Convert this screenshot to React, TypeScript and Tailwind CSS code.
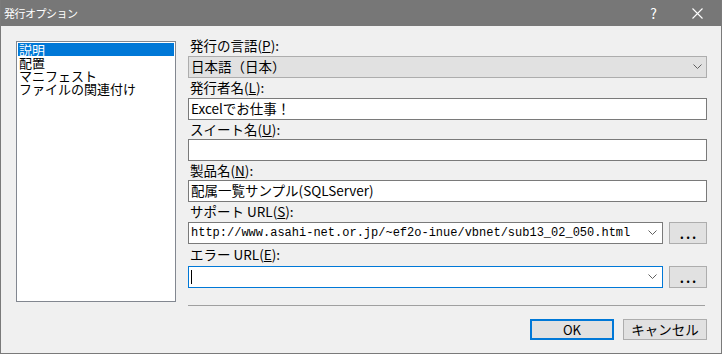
import { ReactNode } from "react";

const jp = { fontFamily: '"Noto Sans CJK JP", "Noto Sans", sans-serif' };
const mono = { fontFamily: '"Liberation Mono", "Noto Sans CJK JP", monospace' };

function Chevron() {
  return (
    <svg width="9" height="6" viewBox="0 0 9 6" className="shrink-0">
      <polyline points="0.5,0.5 4.5,4.5 8.5,0.5" fill="none" stroke="#606060" strokeWidth="1" />
    </svg>
  );
}

function Label({ children, h = "h-[20px]" }: { children: ReactNode; h?: string }) {
  return (
    <div className={`${h} flex items-center pl-[2px] text-[13.5px] leading-none text-black`}>{children}</div>
  );
}

function TextBox({ value }: { value?: string }) {
  return (
    <div className="h-[22px] w-[519px] border border-[#7a7a7a] bg-white flex items-center pl-[2px] text-[13.5px] leading-none">
      {value}
    </div>
  );
}

function BrowseButton() {
  return (
    <div className="h-[22px] w-[38px] border border-[#adadad] bg-[#e1e1e1] flex items-center justify-center pl-[2px] text-[13px] font-bold tracking-[2px] leading-none">
      ...
    </div>
  );
}

export default function App() {
  const pages = ["説明", "配置", "マニフェスト", "ファイルの関連付け"];

  return (
    <div className="w-[722px] h-[354px] bg-[#f0f0f0] border-x border-b border-[#7a7a7a] flex flex-col" style={jp}>
      {/* title bar */}
      <div className="h-[26px] bg-[#777777] flex items-center text-white shrink-0">
        <span className="pl-[3px] text-[11px] tracking-[-0.5px]">発行オプション</span>
        <span className="ml-auto text-[14px] leading-none mr-[35px]">?</span>
        <svg width="11" height="11" viewBox="0 0 11 11" className="mr-[18px]">
          <path d="M0.5 0.5 L10.5 10.5 M10.5 0.5 L0.5 10.5" stroke="white" strokeWidth="1.1" />
        </svg>
      </div>

      <div className="flex pl-[15px]">
        {/* page list */}
        <div className="mt-[15px] w-[160px] h-[261px] border border-[#828790] bg-white p-[1px] text-[13px] leading-[13px]">
          {pages.map((p, i) => (
            <div key={p} className={`h-[13px] pl-[1px] whitespace-nowrap ${i === 0 ? "bg-[#0078d7] text-white" : "text-black"}`}>
              {p}
            </div>
          ))}
        </div>

        {/* form */}
        <div className="ml-[12px] mt-[10px] flex flex-col w-[519px]">
          <Label>発行の言語(<u>P</u>):</Label>
          <div className="h-[22px] border border-[#adadad] bg-[#e1e1e1] flex items-center justify-between pl-[2px] pr-[4px] text-[13.5px] leading-none">
            <span>日本語（日本）</span>
            <Chevron />
          </div>

          <Label>発行者名(<u>L</u>):</Label>
          <TextBox value="Excelでお仕事！" />

          <Label h="h-[19px]">スイート名(<u>U</u>):</Label>
          <TextBox />

          <Label h="h-[19px]">製品名(<u>N</u>):</Label>
          <TextBox value="配属一覧サンプル(SQLServer)" />

          <Label>サポート URL(<u>S</u>):</Label>
          <div className="flex gap-[6px]">
            <div className="h-[22px] w-[475px] border border-[#7a7a7a] bg-white flex items-center justify-between pl-[2px] pr-[5px]">
              <span className="text-[12px] leading-none" style={mono}>
                http://www.asahi-net.or.jp/~ef2o-inue/vbnet/sub13_02_050.html
              </span>
              <Chevron />
            </div>
            <BrowseButton />
          </div>

          <Label h="h-[22px]">エラー URL(<u>E</u>):</Label>
          <div className="flex gap-[6px]">
            <div className="h-[22px] w-[475px] border border-[#0078d7] bg-white flex items-center justify-between pl-[2px] pr-[5px]">
              <span className="w-px h-[14px] bg-black" />
              <Chevron />
            </div>
            <BrowseButton />
          </div>

          <div className="mt-[17px] h-px w-[517px] bg-[#a0a0a0]" />

          <div className="mt-[13px] flex justify-end gap-[9px]">
            <div className="h-[21px] w-[84px] border-2 border-[#0078d7] bg-[#e1e1e1] flex items-center justify-center text-[13px] leading-none">
              OK
            </div>
            <div className="h-[21px] w-[84px] border border-[#adadad] bg-[#e1e1e1] flex items-center justify-center text-[13.5px] leading-none">
              キャンセル
            </div>
          </div>
        </div>
      </div>
    </div>
  );
}
